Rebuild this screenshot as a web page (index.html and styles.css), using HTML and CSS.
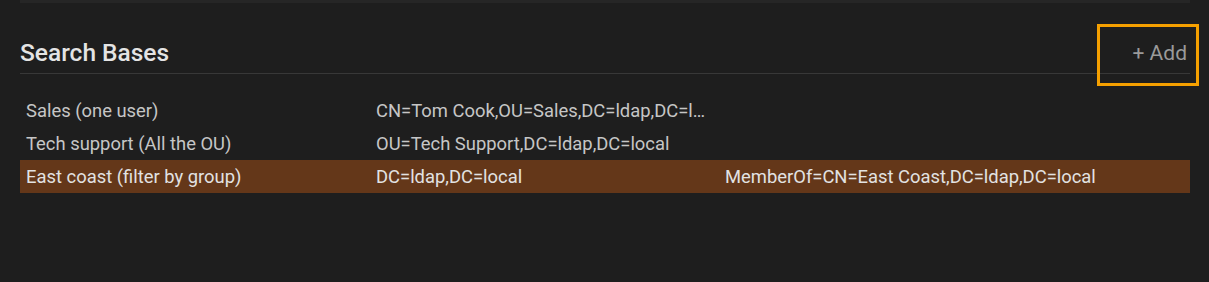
FILE: index.html
```html
<!DOCTYPE html>
<html lang="en">
<head>
  <meta charset="UTF-8">
  <title>Search Bases</title>
  <link rel="stylesheet" href="styles.css">
</head>
<body>

  <div class="top-strip"></div>

  <div class="section">
    <div class="section-header">
      <h2>Search Bases</h2>
      <button class="add-button">+ Add<span class="highlight"></span></button>
    </div>

    <div class="base-list">
      <div class="base-row">
        <div class="cell">Sales (one user)</div>
        <div class="cell">CN=Tom Cook,OU=Sales,DC=ldap,DC=local</div>
        <div class="cell"></div>
      </div>
      <div class="base-row">
        <div class="cell">Tech support (All the OU)</div>
        <div class="cell">OU=Tech Support,DC=ldap,DC=local</div>
        <div class="cell"></div>
      </div>
      <div class="base-row selected">
        <div class="cell">East coast (filter by group)</div>
        <div class="cell">DC=ldap,DC=local</div>
        <div class="cell">MemberOf=CN=East Coast,DC=ldap,DC=local</div>
      </div>
    </div>
  </div>

</body>
</html>
```

FILE: styles.css
```css
body {
  margin: 0;
  font-family: Roboto, "Liberation Sans", sans-serif;
  background-color: #1e1e1e;
  height: 100vh;
  overflow: hidden;
}

.top-strip {
  height: 3px;
  margin: 0 19px 0 20px;
  background-color: #262626;
}

.section {
  padding: 0 19px 0 20px;
}

.section-header {
  display: flex;
  justify-content: space-between;
  align-items: flex-end;
  height: 70px;
  border-bottom: 1px solid #383838;
}

.section-header h2 {
  margin: 0 0 6px 0;
  font-size: 24.5px;
  font-weight: 500;
  color: #e4e4e4;
}

.add-button {
  position: relative;
  background: none;
  border: none;
  padding: 0 3px 0 0;
  margin-bottom: 8px;
  font-family: inherit;
  font-size: 21px;
  color: #9a9a9a;
  cursor: pointer;
}

.highlight {
  position: absolute;
  top: -17px;
  left: -35px;
  right: -9px;
  bottom: -21px;
  border: 3px solid #f5a000;
}

.base-list {
  margin-top: 20px;
}

.base-row {
  display: grid;
  grid-template-columns: 350px 349px 1fr;
  height: 33px;
  line-height: 33px;
  font-size: 18.4px;
  color: #c6c6c6;
}

.base-row .cell {
  padding: 0 6px;
  white-space: nowrap;
  overflow: hidden;
  text-overflow: ellipsis;
}

.base-row.selected {
  background-color: #643719;
  color: #e2e2e2;
}
```
